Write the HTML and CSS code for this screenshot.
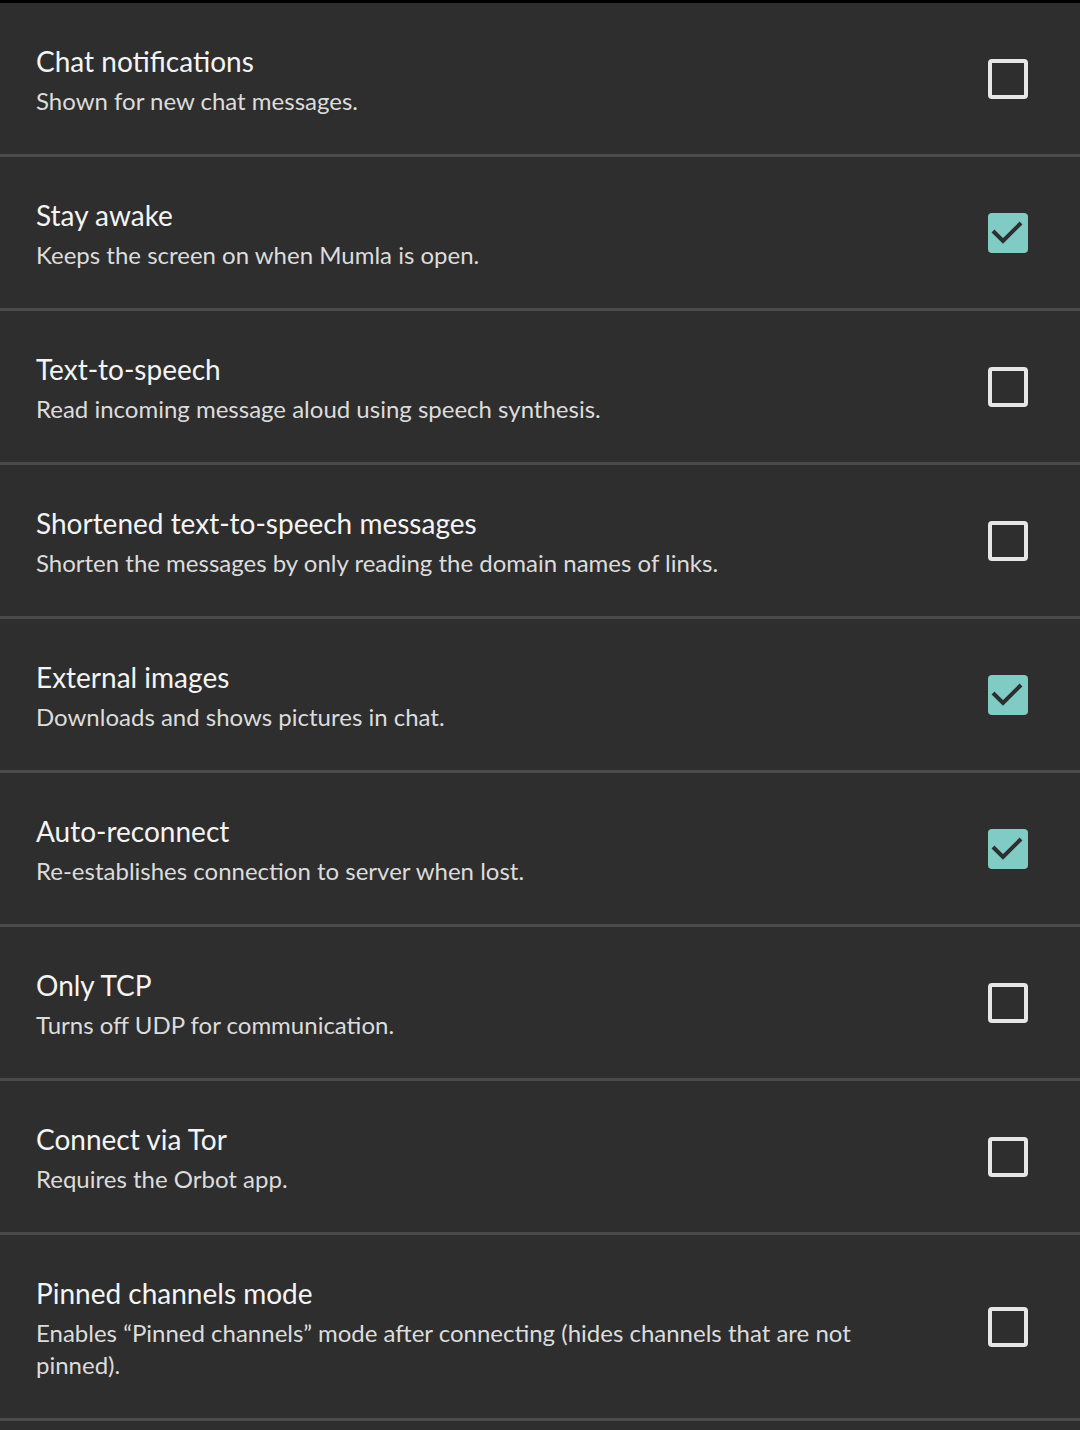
FILE: index.html
```html
<!DOCTYPE html>
<html>
<head>
<meta charset="utf-8">
<link rel="stylesheet" href="styles.css">
</head>
<body>
<div class="topbar"></div>
<ul class="prefs">
  <li class="pref">
    <div class="text"><div class="title">Chat notifications</div><div class="summary">Shown for new chat messages.</div></div>
    <span class="box"></span>
  </li>
  <li class="pref">
    <div class="text"><div class="title">Stay awake</div><div class="summary">Keeps the screen on when Mumla is open.</div></div>
    <span class="box checked"><svg viewBox="0 0 40 40" width="40" height="40"><path d="M5 18 L15 28 L33 10" fill="none" stroke="#2b2f30" stroke-width="4"/></svg></span>
  </li>
  <li class="pref">
    <div class="text"><div class="title">Text-to-speech</div><div class="summary">Read incoming message aloud using speech synthesis.</div></div>
    <span class="box"></span>
  </li>
  <li class="pref">
    <div class="text"><div class="title">Shortened text-to-speech messages</div><div class="summary">Shorten the messages by only reading the domain names of links.</div></div>
    <span class="box"></span>
  </li>
  <li class="pref">
    <div class="text"><div class="title">External images</div><div class="summary">Downloads and shows pictures in chat.</div></div>
    <span class="box checked"><svg viewBox="0 0 40 40" width="40" height="40"><path d="M5 18 L15 28 L33 10" fill="none" stroke="#2b2f30" stroke-width="4"/></svg></span>
  </li>
  <li class="pref">
    <div class="text"><div class="title">Auto-reconnect</div><div class="summary">Re-establishes connection to server when lost.</div></div>
    <span class="box checked"><svg viewBox="0 0 40 40" width="40" height="40"><path d="M5 18 L15 28 L33 10" fill="none" stroke="#2b2f30" stroke-width="4"/></svg></span>
  </li>
  <li class="pref">
    <div class="text"><div class="title">Only TCP</div><div class="summary">Turns off UDP for communication.</div></div>
    <span class="box"></span>
  </li>
  <li class="pref">
    <div class="text"><div class="title">Connect via Tor</div><div class="summary">Requires the Orbot app.</div></div>
    <span class="box"></span>
  </li>
  <li class="pref">
    <div class="text"><div class="title">Pinned channels mode</div><div class="summary">Enables “Pinned channels” mode after connecting (hides channels that are not pinned).</div></div>
    <span class="box"></span>
  </li>
</ul>
</body>
</html>
```
FILE: styles.css
```css
html, body {
  margin: 0;
  padding: 0;
  background: #2e2e2e;
  font-family: "Lato", "Noto Sans", sans-serif;
}
.topbar {
  height: 3px;
  background: #000;
}
.prefs {
  list-style: none;
  margin: 0;
  padding: 0;
}
.pref {
  display: flex;
  align-items: center;
  padding: 0 52px 0 36px;
  border-bottom: 3px solid #4a4a4a;
  box-sizing: border-box;
  min-height: 154px;
}
.text {
  flex: 1;
  max-width: 860px;
  padding: 40px 0 37px;
}
.title {
  color: #f4f4f4;
  font-size: 28px;
  line-height: 36px;
  margin-bottom: 6px;
}
.summary {
  color: #dcdcdc;
  font-size: 24px;
  line-height: 32px;
}
.box {
  flex: none;
  width: 40px;
  height: 40px;
  box-sizing: border-box;
  border: 4px solid #e6e6e6;
  border-radius: 4px;
  margin-left: auto;
  position: relative;
}
.box.checked {
  background: #80cbc4;
  border-color: #80cbc4;
}
.box svg {
  position: absolute;
  left: -4px;
  top: -4px;
}
```
